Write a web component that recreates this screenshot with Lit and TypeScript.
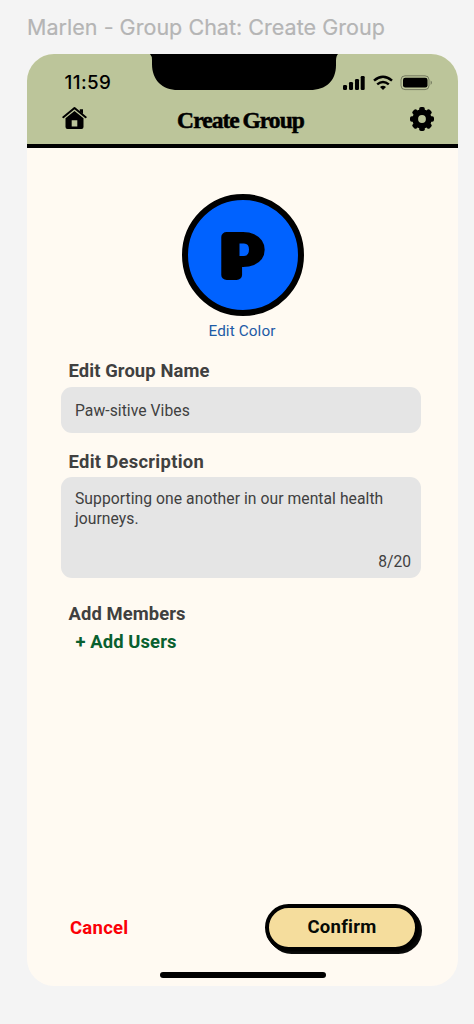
import { LitElement, html, css, svg } from "lit";
import { customElement } from "lit/decorators.js";

const TEETH = [0, 45, 90, 135, 180, 225, 270, 315];

@customElement("app-root")
export class AppRoot extends LitElement {
  static styles = css`
    :host {
      display: block;
      box-sizing: border-box;
      width: 474px;
      height: 1024px;
      padding-left: 27px;
      overflow: hidden;
      background: #f4f4f4;
      color: #404040;
      font-family: Roboto, "Liberation Sans", sans-serif;
      white-space: nowrap;
    }
    * { box-sizing: border-box; }
    svg { display: block; }
    .frame-label {
      height: 54px;
      padding-top: 14px;
      font: 400 21.5px/27px Inter, sans-serif;
      color: #b5b5b5;
      letter-spacing: 0.03px;
      -webkit-text-stroke: 0.2px #b5b5b5;
    }
    .phone {
      display: flex;
      flex-direction: column;
      width: 431px;
      height: 932px;
      border-radius: 27px;
      overflow: hidden;
      background: #fffaf2;
    }
    .header {
      height: 94px;
      flex: none;
      background: #bcc59a;
      border-bottom: 4px solid #000;
    }
    .status {
      display: flex;
      height: 46px;
    }
    .time {
      width: 122px;
      padding: 18px 0 0 37.5px;
      font: 500 18.8px/22px Inter, sans-serif;
      letter-spacing: 0.4px;
      color: #000;
    }
    .signals { padding: 20px 0 0 5px; }
    .nav {
      display: grid;
      grid-template-columns: 60px 1fr 60px;
      height: 44px;
      padding: 5px 10px 0 11px;
      color: #000;
    }
    .home { padding: 1px 0 0 24px; }
    .gear { margin: 1px 0 0 21px; }
    .title {
      text-align: center;
      margin-right: 5px;
      font: 700 23.5px/30px "Liberation Serif", serif;
      letter-spacing: -0.95px;
      word-spacing: -1.3px;
      -webkit-text-stroke: 0.5px #000;
    }
    .avatar { margin: 46px auto 0 155px; width: 122px; }
    .edit-color {
      width: 122px;
      margin: 4px 0 0 154px;
      text-align: center;
      font-size: 15.3px;
      line-height: 22px;
      color: #1d5ba6;
      letter-spacing: 0.1px;
    }
    .form { padding: 17px 37px 0 33.5px; }
    .label {
      padding-left: 8px;
      font-size: 18.4px;
      line-height: 24px;
      font-weight: 700;
      letter-spacing: 0.1px;
    }
    .label.wide { letter-spacing: 0.3px; }
    .field {
      border-radius: 11px;
      background: #e5e5e5;
      font-size: 15.7px;
      line-height: 19.5px;
      letter-spacing: 0.05px;
      padding-left: 14.5px;
    }
    .name { height: 46px; padding-top: 14px; margin: 4px 0 17px; }
    .description {
      display: flex;
      flex-direction: column;
      justify-content: space-between;
      height: 101px;
      margin: 3px 0 24px;
      padding-top: 12px;
      padding-right: 10px;
      padding-bottom: 6px;
    }
    .count { align-self: flex-end; font-size: 15.6px; letter-spacing: 0; }
    .add {
      padding: 4px 0 0 15px;
      font-size: 18.4px;
      line-height: 24px;
      font-weight: 700;
      letter-spacing: 0.1px;
      color: #09602f;
    }
    .actions {
      display: flex;
      justify-content: space-between;
      align-items: flex-start;
      margin-top: auto;
      padding: 0 39px 0 43px;
      font-size: 18.5px;
      font-weight: 700;
      letter-spacing: 0.25px;
    }
    .cancel { color: #fb0007; line-height: 24px; padding-top: 12px; }
    .confirm {
      width: 154px;
      height: 47px;
      border: 4px solid #000;
      border-radius: 24px;
      background: #f5dd9d;
      color: #060a06;
      text-align: center;
      line-height: 39px;
      box-shadow: 1px 1px #050505, 2px 2px #080808, 3px 3px #0b0b0b;
    }
    .indicator {
      flex: none;
      width: 166px;
      height: 6px;
      margin: 21px 0 8px 133px;
      border-radius: 3px;
      background: #000;
    }
  `;

  render() {
    return html`
      <div class="frame-label">Marlen - Group Chat: Create Group</div>
      <div class="phone">
        <div class="header">
          <div class="status">
            <div class="time">11:59</div>
            <svg width="189" height="37" viewBox="0 0 189 37">
              <path d="M1 0H189Q187 2 187 7V11C187 27 177 36 161 36H29C13 36 3 26 3 10V6Q3 2 1 0Z" />
            </svg>
            <svg class="signals" width="96" height="38" viewBox="0 0 91 18">
              <rect x="0" y="11" width="4" height="5" rx="1.2" />
              <rect x="6" y="8" width="4" height="8" rx="1.2" />
              <rect x="12" y="5" width="4" height="11" rx="1.2" />
              <rect x="17.7" y="2" width="4" height="14" rx="1.2" />
              <g fill="none" stroke="#000" stroke-width="2.5">
                <path d="M31 6.6Q40 -1.1 49 6.6" />
                <path d="M34.2 10.4Q40 5.6 45.8 10.4" />
              </g>
              <path d="M37 13Q40 10.6 43 13L40 16Z" />
              <rect x="58" y="1.8" width="28" height="13.8" rx="4" fill="none" stroke="#000" stroke-opacity=".38" />
              <rect x="60" y="3.8" width="24.5" height="9.8" rx="2.3" />
              <path d="M87.7 6.5Q90 8.7 87.7 11Z" fill-opacity=".45" />
            </svg>
          </div>
          <div class="nav">
            <svg class="home" width="50" height="26" viewBox="0 0 26 25">
              <path d="M1.3 11.2L12.5 2L23.7 11.2" fill="none" stroke="#000" stroke-width="2" stroke-linecap="round" stroke-linejoin="round" />
              <path d="M17.8 3.2H21V8L17.8 5.5Z" />
              <path fill-rule="evenodd" d="M3.5 12.2L12.5 4.9L21.5 12.2V21Q21.5 23 19.5 23H5.5Q3.5 23 3.5 21ZM9.7 14.2V20.4H15.3V14.2Z" />
            </svg>
            <div class="title">Create Group</div>
            <svg class="gear" width="26" height="26" viewBox="0 0 26 26">
              <circle cx="13" cy="13" r="6.8" fill="none" stroke="#000" stroke-width="5.8" />
              ${TEETH.map((a) => svg`<rect x="10.2" y="1" width="5.6" height="6" rx="1.8" transform="rotate(${a} 13 13)" />`)}
            </svg>
          </div>
        </div>
        <svg class="avatar" width="122" height="122" viewBox="0 0 122 122">
          <circle cx="61" cy="61" r="58" fill="#0062ff" stroke="#000" stroke-width="6" />
          <text transform="translate(41.5 81) scale(1.08 1)" font-family="Roboto, sans-serif" font-weight="900" font-size="54" stroke="#000" stroke-width="10" stroke-linejoin="round">P</text>
          <path d="M57.5 49.5H62Q67 49.5 67 55.5Q67 62 62 62H57.5Z" fill="#0062ff" />
        </svg>
        <div class="edit-color">Edit Color</div>
        <div class="form">
          <div class="label">Edit Group Name</div>
          <div class="field name">Paw-sitive Vibes</div>
          <div class="label wide">Edit Description</div>
          <div class="field description">
            <div>Supporting one another in our mental health<br />journeys.</div>
            <div class="count">8/20</div>
          </div>
          <div class="label">Add Members</div>
          <div class="add">+ Add Users</div>
        </div>
        <div class="actions">
          <div class="cancel">Cancel</div>
          <div class="confirm">Confirm</div>
        </div>
        <div class="indicator"></div>
      </div>
    `;
  }
}
